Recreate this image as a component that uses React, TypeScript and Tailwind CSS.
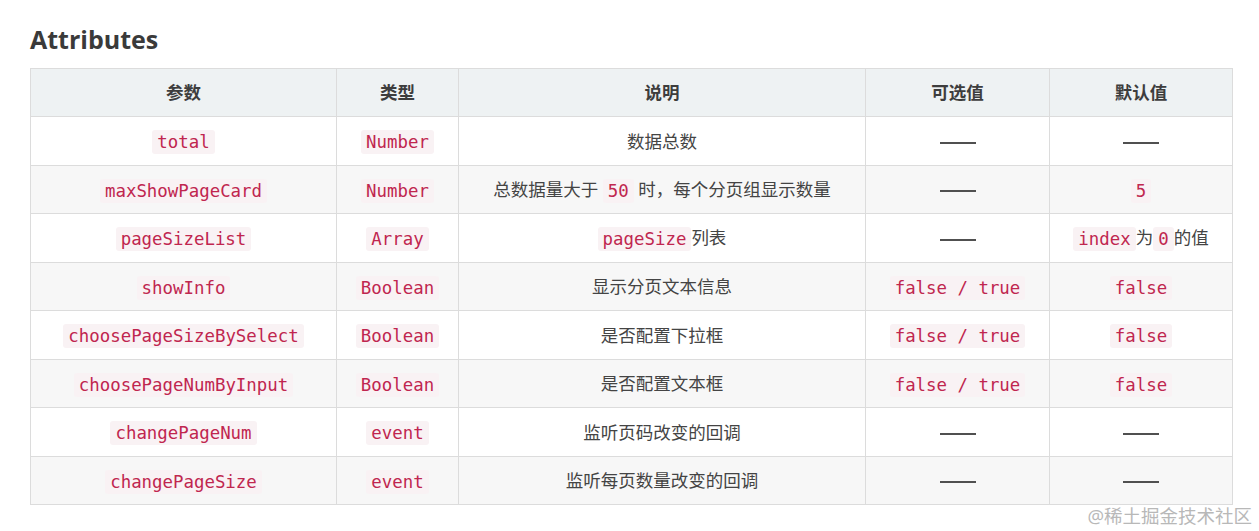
import React from "react";

const cjk = { fontFamily: '"Open Sans", "Noto Sans CJK SC", sans-serif' };

function C({ children }: { children: React.ReactNode }) {
  return (
    <code
      className="inline-block rounded-[3px] bg-[#f9f2f4] px-[5px] py-[1px] align-middle text-[17.4px] leading-[22px] text-[#c0264f]"
      style={{ fontFamily: '"DejaVu Sans Mono", "Liberation Mono", monospace' }}
    >
      {children}
    </code>
  );
}

const D = () => <span className="inline-block h-[2px] w-[36px] bg-[#505050] align-middle" />;

type Row = [React.ReactNode, React.ReactNode, React.ReactNode, React.ReactNode, React.ReactNode];

const rows: Row[] = [
  [<C>total</C>, <C>Number</C>, "数据总数", <D />, <D />],
  [
    <C>maxShowPageCard</C>,
    <C>Number</C>,
    <>
      总数据量大于 <C>50</C> 时，每个分页组显示数量
    </>,
    <D />,
    <C>5</C>,
  ],
  [
    <C>pageSizeList</C>,
    <C>Array</C>,
    <>
      <C>pageSize</C>列表
    </>,
    <D />,
    <>
      <C>index</C>为<C>0</C>的值
    </>,
  ],
  [<C>showInfo</C>, <C>Boolean</C>, "显示分页文本信息", <C>false / true</C>, <C>false</C>],
  [<C>choosePageSizeBySelect</C>, <C>Boolean</C>, "是否配置下拉框", <C>false / true</C>, <C>false</C>],
  [<C>choosePageNumByInput</C>, <C>Boolean</C>, "是否配置文本框", <C>false / true</C>, <C>false</C>],
  [<C>changePageNum</C>, <C>event</C>, "监听页码改变的回调", <D />, <D />],
  [<C>changePageSize</C>, <C>event</C>, "监听每页数量改变的回调", <D />, <D />],
];

export default function App() {
  return (
    <div className="relative h-[531px] w-[1259px] overflow-hidden bg-white" style={cjk}>
      <div className="pl-[30px] pt-[20px]">
        <h3 className="mb-[10px] h-[38px] text-[25px] font-bold leading-[38px] text-[#3a3a3a]">Attributes</h3>
        <table className="w-[1202px] table-fixed border-collapse text-center text-[17.5px] text-[#444]">
          <colgroup>
            <col className="w-[306px]" />
            <col className="w-[122px]" />
            <col className="w-[407px]" />
            <col className="w-[184px]" />
            <col className="w-[183px]" />
          </colgroup>
          <thead>
            <tr className="h-[48px] bg-[#eef2f3]">
              {["参数", "类型", "说明", "可选值", "默认值"].map((h) => (
                <th key={h} className="border border-[#dcdcdc] p-0 font-bold text-[#3d3d3d]">
                  {h}
                </th>
              ))}
            </tr>
          </thead>
          <tbody>
            {rows.map((r, i) => (
              <tr key={i} className={i % 2 === 1 ? "h-[48.5px] bg-[#f7f7f7]" : "h-[48.5px] bg-white"}>
                {r.map((c, j) => (
                  <td key={j} className="border border-[#dcdcdc] p-0 align-middle">
                    {c}
                  </td>
                ))}
              </tr>
            ))}
          </tbody>
        </table>
      </div>
      <div className="absolute bottom-[2px] right-[7px] text-[18.5px] leading-[26px] text-[#b8b8b8]">@稀土掘金技术社区</div>
    </div>
  );
}
